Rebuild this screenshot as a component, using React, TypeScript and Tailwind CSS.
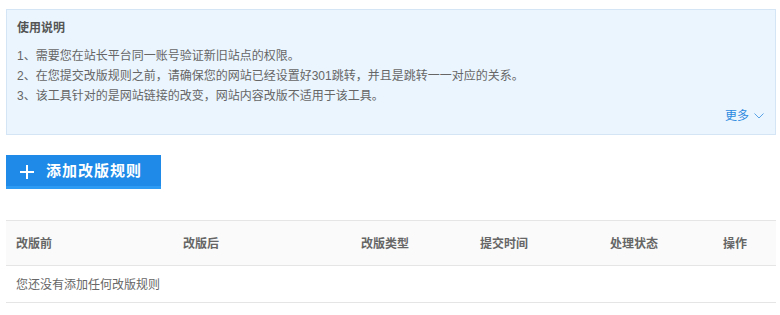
import React from "react";

const cols = "grid grid-cols-[167px_178px_119px_130px_113px_63px]";

export default function App() {
  return (
    <div className="w-[780px] h-[315px] bg-white pl-[6px] pt-[9px] text-[12px] text-[#666]" style={{ fontFamily: '"Liberation Sans", "Noto Sans CJK SC", sans-serif' }}>
      <div className="w-[770px]">
        <div className="border border-[#d4e6f6] bg-[#eaf5fe] pl-[10px] pr-[10px] pt-[8px] pb-[8px]">
          <div className="font-bold text-[#555] text-[12px] leading-[20px]">使用说明</div>
          <div className="mt-[8px] leading-[20px]">
            <div>1、需要您在站长平台同一账号验证新旧站点的权限。</div>
            <div>2、在您提交改版规则之前，请确保您的网站已经设置好301跳转，并且是跳转一一对应的关系。</div>
            <div>3、该工具针对的是网站链接的改变，网站内容改版不适用于该工具。</div>
          </div>
          <div className="flex justify-end items-center leading-[20px] text-[#2d8ae0]">
            <span>更多</span>
            <svg width="10" height="6" viewBox="0 0 10 6" className="ml-[5px] mr-[1px]">
              <path d="M0.5 0.5 L5 5 L9.5 0.5" fill="none" stroke="#5aa2e6" strokeWidth="1" />
            </svg>
          </div>
        </div>

        <div className="mt-[20px] w-[155px] h-[34px] bg-[#1f8ae8] border-b-[3px] border-[#2d9bf3] flex items-center text-white">
          <svg width="14" height="14" viewBox="0 0 14 14" className="ml-[14px] mt-[3px]">
            <path d="M7 0 V14 M0 7 H14" stroke="white" strokeWidth="2" />
          </svg>
          <span className="ml-[12px] font-bold text-[15px] tracking-[1px] leading-[20px]">添加改版规则</span>
        </div>

        <div className="mt-[31px]">
          <div className={`${cols} h-[46px] items-center pt-[2px] bg-[#fafafa] border-t border-b border-[#e5e5e5] font-bold text-[#666]`}>
            <div className="pl-[10px]">改版前</div>
            <div className="pl-[10px]">改版后</div>
            <div className="pl-[10px]">改版类型</div>
            <div className="pl-[10px]">提交时间</div>
            <div className="pl-[10px]">处理状态</div>
            <div className="pl-[10px]">操作</div>
          </div>
          <div className="h-[37px] flex items-center pt-[2px] pl-[10px] border-b border-[#e5e5e5]">您还没有添加任何改版规则</div>
        </div>
      </div>
    </div>
  );
}
